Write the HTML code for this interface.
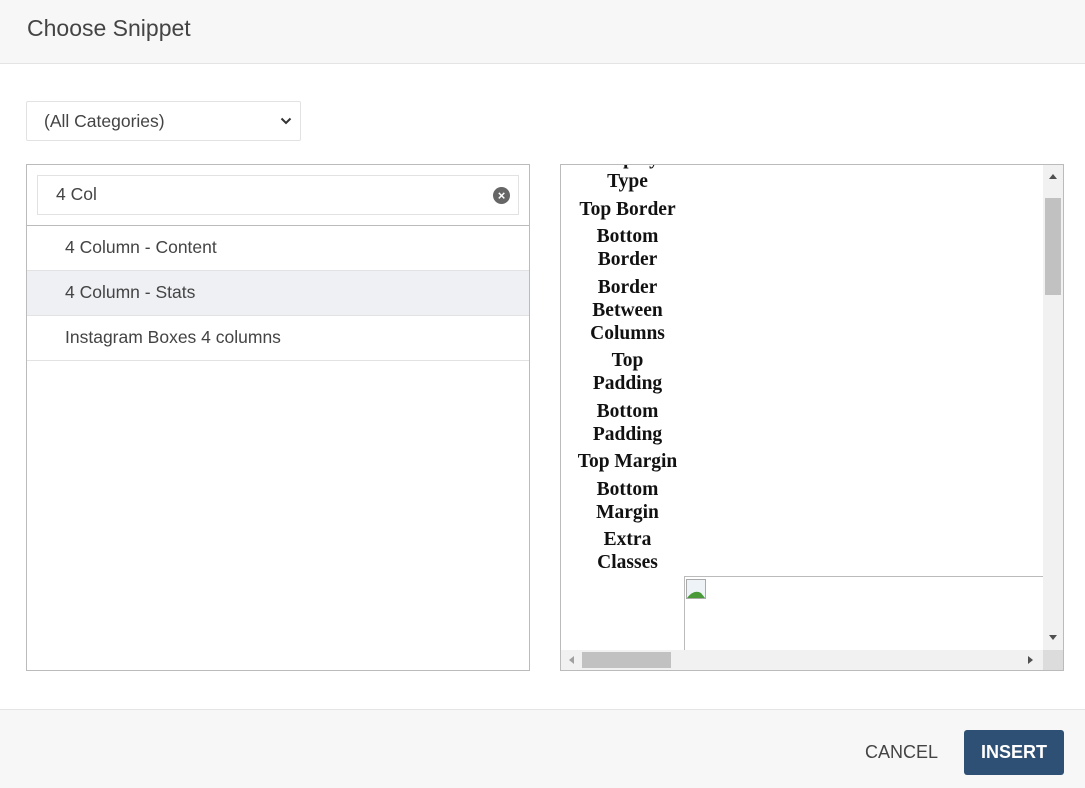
<!DOCTYPE html>
<html><head><style>
*{box-sizing:border-box;margin:0;padding:0}
body{width:1085px;height:788px;background:#fff;font-family:"Liberation Sans",sans-serif;position:relative;overflow:hidden;color:#444}
.hdr{position:absolute;left:0;top:0;width:1085px;height:64px;background:#f7f7f7;border-bottom:1px solid #e4e4e4}
.hdr span{position:absolute;left:27px;top:15px;font-size:23px;color:#444}
.sel{position:absolute;left:26px;top:101px;width:275px;height:40px;border:1px solid #e2e2e2;border-radius:2px;font-size:17.5px;padding:9px 17px;color:#444}
.lp{position:absolute;left:26px;top:164px;width:504px;height:507px;border:1px solid #bbb}
.srch{position:absolute;left:10px;top:10px;width:482px;height:40px;border:1px solid #e2e2e2;font-size:17.5px;padding:8px 18px;color:#444}
.x{position:absolute;right:8px;top:11px;width:17px;height:17px;border-radius:50%;background:#666;color:#fff;font-size:13px;font-weight:bold;text-align:center;line-height:17px}
.list{position:absolute;left:0;top:60px;width:502px;border-top:1px solid #bbb}
.it{height:45px;border-bottom:1px solid #e2e2e2;font-size:17.5px;padding:11px 38px;color:#444}
.rp{position:absolute;left:560px;top:164px;width:504px;height:507px;border:1px solid #bbb;overflow:hidden}
.col{position:absolute;left:0;top:0;width:133px;text-align:center;font-family:"Liberation Serif",serif;font-weight:bold;font-size:19.5px;line-height:23px;color:#111}
.col div{margin-bottom:4.5px}
.img{position:absolute;left:123px;top:411px;width:360px;height:80px;border:1px solid #bbb;border-right:0;border-bottom:0}
.vs{position:absolute;right:0;top:0;width:20px;height:485px;background:#f1f1f1}
.vs .th{position:absolute;left:2px;top:33px;width:16px;height:97px;background:#c1c1c1}
.hs{position:absolute;left:0;bottom:0;width:502px;height:20px;background:#f1f1f1}
.hs .th{position:absolute;left:21px;top:2px;width:89px;height:16px;background:#c1c1c1}
.ftr{position:absolute;left:0;top:709px;width:1085px;height:79px;background:#f7f7f7;border-top:1px solid #e4e4e4}
.cancel{position:absolute;left:865px;top:32px;font-size:18px;color:#444}
.ins{position:absolute;left:964px;top:20px;width:100px;height:45px;background:#2f5075;border-radius:3px;color:#fff;font-size:18px;font-weight:bold;text-align:center;line-height:45px}
</style></head><body>
<div class="hdr"><span>Choose Snippet</span></div>
<div class="sel">(All Categories)<svg style="position:absolute;right:8px;top:15px" width="12" height="8" viewBox="0 0 12 8"><path d="M1.5 1.5 6 6l4.5-4.5" fill="none" stroke="#333" stroke-width="2"/></svg></div>
<div class="lp">
<div class="srch">4 Col<div class="x">×</div></div>
<div class="list">
<div class="it">4 Column - Content</div>
<div class="it" style="background:#eff0f4">4 Column - Stats</div>
<div class="it">Instagram Boxes 4 columns</div>
</div></div>
<div class="rp">
<div class="col" style="top:-18px">
<div>Display<br>Type</div><div>Top Border</div><div>Bottom<br>Border</div><div>Border<br>Between<br>Columns</div><div>Top<br>Padding</div><div>Bottom<br>Padding</div><div>Top Margin</div><div>Bottom<br>Margin</div><div>Extra<br>Classes</div>
</div>
<div class="img"><svg style="position:absolute;left:1px;top:2px" width="20" height="20"><rect x="0.5" y="0.5" width="19" height="19" fill="#eef3f8" stroke="#aaa"/><path d="M1 19 Q8 10 15 14 L19 19Z" fill="#4a9a3a"/></svg></div>
<div class="vs"><div class="th"></div>
<svg style="position:absolute;left:6px;top:9px" width="8" height="5"><path d="M0 5 4 0 8 5Z" fill="#505050"/></svg>
<svg style="position:absolute;left:6px;top:470px" width="8" height="5"><path d="M0 0 4 5 8 0Z" fill="#505050"/></svg></div>
<div class="hs"><div class="th"></div>
<svg style="position:absolute;left:8px;top:6px" width="5" height="8"><path d="M5 0 0 4 5 8Z" fill="#a0a0a0"/></svg>
<svg style="position:absolute;left:467px;top:6px" width="5" height="8"><path d="M0 0 5 4 0 8Z" fill="#505050"/></svg></div>
<div style="position:absolute;right:0;bottom:0;width:20px;height:20px;background:#dcdcdc"></div>
</div>
<div class="ftr"><span class="cancel">CANCEL</span><div class="ins">INSERT</div></div>
</body></html>
